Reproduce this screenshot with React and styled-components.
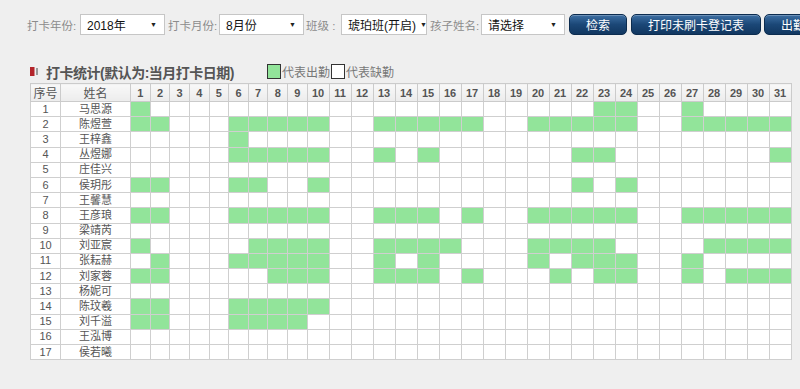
import styled, { createGlobalStyle } from "styled-components";

const GlobalStyle = createGlobalStyle`
  html, body {
    margin: 0;
    padding: 0;
  }
  body {
    width: 800px;
    height: 389px;
    overflow: hidden;
    background: #efefef;
    font-family: "Liberation Sans", "Noto Sans CJK SC", sans-serif;
  }
`;

const students = [
  { name: "马思源", days: [1, 23, 24, 27] },
  { name: "陈煜萱", days: [1, 2, 6, 7, 8, 9, 10, 13, 14, 15, 16, 17, 20, 21, 22, 23, 24, 27, 28, 29, 30, 31] },
  { name: "王梓鑫", days: [6] },
  { name: "丛煜娜", days: [6, 7, 8, 9, 10, 13, 15, 22, 23, 31] },
  { name: "庄佳兴", days: [] },
  { name: "侯玥彤", days: [1, 2, 6, 7, 10, 22, 24] },
  { name: "王馨慧", days: [] },
  { name: "王彦琅", days: [1, 2, 6, 7, 8, 9, 10, 13, 14, 15, 17, 20, 21, 22, 23, 24, 27, 28, 29, 30, 31] },
  { name: "梁靖芮", days: [] },
  { name: "刘亚宸", days: [1, 7, 8, 9, 10, 13, 14, 15, 16, 20, 21, 22, 23, 28, 29, 30, 31] },
  { name: "张耘赫", days: [2, 6, 7, 8, 9, 10, 13, 15, 20, 22, 23, 24, 27] },
  { name: "刘家蓉", days: [1, 2, 8, 9, 10, 13, 14, 15, 17, 21, 23, 24, 27, 29, 30, 31] },
  { name: "杨妮可", days: [] },
  { name: "陈玟羲", days: [1, 2, 6, 7, 8, 9, 10] },
  { name: "刘千溢", days: [1, 2, 6, 7, 8, 9] },
  { name: "王泓博", days: [] },
  { name: "侯若曦", days: [] },
];

const monthDays = Array.from({ length: 31 }, (_, i) => i + 1);

const Page = styled.div`
  display: flex;
  flex-direction: column;
`;

const Toolbar = styled.div`
  display: flex;
  align-items: center;
  height: 21px;
  padding: 14px 0 0 27px;
  white-space: nowrap;
`;

const Label = styled.span`
  flex: none;
  width: ${(p) => p.$w}px;
  font-size: 11.5px;
  color: #8c8c8c;
`;

const Select = styled.div`
  flex: none;
  box-sizing: border-box;
  display: flex;
  align-items: center;
  justify-content: space-between;
  width: ${(p) => p.$w}px;
  height: 21px;
  margin-right: ${(p) => p.$gap}px;
  padding: 0 7px 0 6px;
  background: #fff;
  border: 1px solid #c6c6c6;
  font-size: 12px;
  color: #111;
  white-space: nowrap;
`;

const Caret = styled.span`
  margin-left: 4px;
  font-size: 7px;
  color: #222;
`;

const Button = styled.button`
  flex: none;
  box-sizing: border-box;
  height: 21px;
  margin: 0 ${(p) => p.$gap}px 0 0;
  padding: 0 16px;
  border: 1px solid #0c2c4f;
  border-radius: 5px;
  background: linear-gradient(#3d6fa3, #1b4777 50%, #113760);
  box-shadow: inset 0 1px 0 rgba(255, 255, 255, 0.25);
  color: #fff;
  font-family: inherit;
  font-size: 12px;
  white-space: nowrap;
`;

const TitleRow = styled.div`
  display: flex;
  align-items: center;
  height: 23px;
  margin: 25px 0 0 30px;
`;

const Title = styled.h2`
  flex: none;
  display: flex;
  align-items: center;
  width: 237px;
  margin: 0;
  font-size: 14px;
  font-weight: 700;
  letter-spacing: -0.5px;
  color: #555;

  svg {
    margin-right: 8px;
  }
`;

const Legend = styled.span`
  display: flex;
  align-items: center;
  margin-right: 1px;
  font-size: 12px;
  color: #777;
`;

const Swatch = styled.i`
  box-sizing: border-box;
  width: 14px;
  height: 15px;
  margin-right: 1px;
  border: 1px solid #333;
  background: ${(p) => p.$color};
`;

const Grid = styled.table`
  margin-left: 30px;
  width: 761px;
  table-layout: fixed;
  border-collapse: collapse;
  background: #fff;
  color: #555;
`;

const HeadCell = styled.th`
  height: 15.7px;
  padding: 0;
  border: 1px solid #cbcbcb;
  background: linear-gradient(#f8f8f8, #ececec);
  font-size: ${(p) => (p.$cjk ? 12 : 11)}px;
  font-weight: ${(p) => (p.$cjk ? 400 : 700)};
  color: #555;
  text-align: center;
`;

const Row = styled.tr`
  height: 15.2px;
`;

const Cell = styled.td`
  padding: 0;
  border: 1px solid #cfcfcf;
  background: ${(p) => (p.$on ? "#92e49a" : "#fff")};
  font-size: 11px;
  line-height: 13px;
  text-align: center;
  white-space: nowrap;
`;

function TitleMark() {
  return (
    <svg width="8" height="9" viewBox="0 0 8 9">
      <rect x="0" y="0" width="4.5" height="9" fill="#b3242a" />
      <rect x="6" y="1" width="2" height="7" fill="#9a9a9a" />
    </svg>
  );
}

export default function App() {
  return (
    <Page>
      <GlobalStyle />
      <Toolbar>
        <Label $w={53}>打卡年份:</Label>
        <Select $w={85} $gap={3}>
          2018年<Caret>▼</Caret>
        </Select>
        <Label $w={51}>打卡月份:</Label>
        <Select $w={85} $gap={2}>
          8月份<Caret>▼</Caret>
        </Select>
        <Label $w={35}>班级 :</Label>
        <Select $w={86} $gap={3}>
          琥珀班(开启)<Caret>▼</Caret>
        </Select>
        <Label $w={51}>孩子姓名:</Label>
        <Select $w={84} $gap={4}>
          请选择<Caret>▼</Caret>
        </Select>
        <Button $gap={4}>检索</Button>
        <Button $gap={3}>打印未刷卡登记表</Button>
        <Button $gap={0}>出勤统计表</Button>
      </Toolbar>

      <TitleRow>
        <Title>
          <TitleMark />
          打卡统计(默认为:当月打卡日期)
        </Title>
        <Swatch $color="#92e49a" />
        <Legend>代表出勤</Legend>
        <Swatch $color="#fff" />
        <Legend>代表缺勤</Legend>
      </TitleRow>

      <Grid>
        <colgroup>
          <col style={{ width: 30 }} />
          <col style={{ width: 70 }} />
          {monthDays.map((d) => (
            <col key={d} style={{ width: d < 10 ? 19.63 : 22.01 }} />
          ))}
        </colgroup>
        <thead>
          <tr>
            <HeadCell $cjk>序号</HeadCell>
            <HeadCell $cjk>姓名</HeadCell>
            {monthDays.map((d) => (
              <HeadCell key={d}>{d}</HeadCell>
            ))}
          </tr>
        </thead>
        <tbody>
          {students.map((s, i) => (
            <Row key={s.name}>
              <Cell>{i + 1}</Cell>
              <Cell>{s.name}</Cell>
              {monthDays.map((d) => (
                <Cell key={d} $on={s.days.includes(d)} />
              ))}
            </Row>
          ))}
        </tbody>
      </Grid>
    </Page>
  );
}
